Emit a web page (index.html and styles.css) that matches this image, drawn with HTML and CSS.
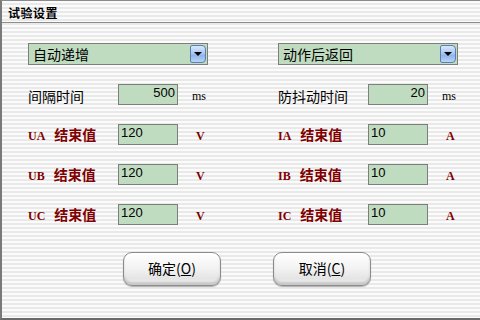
FILE: index.html
```html
<!DOCTYPE html>
<html>
<head>
<meta charset="utf-8">
<link rel="stylesheet" href="styles.css">
</head>
<body>
<div class="win">
  <div class="title">试验设置</div>
  <div class="content">
    <div class="grid">
      <div class="select"><span class="sel-text">自动递增</span><span class="sel-btn"><span class="tri"></span></span></div>
      <div class="select"><span class="sel-text">动作后返回</span><span class="sel-btn"><span class="tri"></span></span></div>

      <div class="row"><span class="label">间隔时间</span><span class="input right">500</span><span class="unit ms">ms</span></div>
      <div class="row"><span class="label">防抖动时间</span><span class="input right">20</span><span class="unit ms">ms</span></div>

      <div class="row"><span class="label red"><b class="code">UA</b>结束值</span><span class="input">120</span><span class="unit va">V</span></div>
      <div class="row"><span class="label red"><b class="code">IA</b>结束值</span><span class="input">10</span><span class="unit va">A</span></div>

      <div class="row"><span class="label red"><b class="code">UB</b>结束值</span><span class="input">120</span><span class="unit va">V</span></div>
      <div class="row"><span class="label red"><b class="code">IB</b>结束值</span><span class="input">10</span><span class="unit va">A</span></div>

      <div class="row"><span class="label red"><b class="code">UC</b>结束值</span><span class="input">120</span><span class="unit va">V</span></div>
      <div class="row"><span class="label red"><b class="code">IC</b>结束值</span><span class="input">10</span><span class="unit va">A</span></div>
    </div>
    <div class="buttons">
      <div class="btn">确定(<u>O</u>)</div>
      <div class="btn">取消(<u>C</u>)</div>
    </div>
  </div>
</div>
</body>
</html>
```

FILE: styles.css
```css
html, body {
  margin: 0;
  padding: 0;
}
body {
  width: 480px;
  height: 320px;
  overflow: hidden;
  font-family: "Noto Sans CJK SC", "Liberation Sans", sans-serif;
}
.win {
  width: 478px;
  height: 317px;
  border-left: 2px solid #7a7a7a;
  border-top: 1px solid #8a8a8a;
  border-bottom: 2px solid #6a6a6a;
  background: repeating-linear-gradient(to bottom, #fbfbfb 0, #fbfbfb 2px, #e9e9e9 2px, #e9e9e9 4px);
  display: flex;
  flex-direction: column;
}
.title {
  height: 21px;
  border-bottom: 1px solid #8c8c8c;
  font-size: 12px;
  font-weight: bold;
  line-height: 23px;
  padding-left: 6px;
  color: #000;
  letter-spacing: 0.5px;
}
.content {
  padding: 20px 0 0 26px;
}
.grid {
  display: grid;
  grid-template-columns: 250px 200px;
  row-gap: 18px;
}
.select {
  width: 178px;
  height: 20px;
  border: 1px solid #7e7e7e;
  background: #c0dcc0;
  display: flex;
  align-items: center;
  justify-content: space-between;
  margin-bottom: 1px;
}
.sel-text {
  font-size: 14px;
  line-height: 20px;
  padding-left: 4px;
  color: #000;
}
.sel-btn {
  width: 16px;
  height: 18px;
  margin-right: 1px;
  border: 1px solid #5d7fae;
  border-radius: 2px 4px 4px 2px;
  background: linear-gradient(to bottom, #d8e8fc 0%, #a9c8f3 45%, #8fb5ec 60%, #b9d4f8 100%);
  display: flex;
  align-items: center;
  justify-content: center;
  box-sizing: border-box;
}
.tri {
  width: 0;
  height: 0;
  border-left: 4px solid transparent;
  border-right: 4px solid transparent;
  border-top: 4px solid #000;
}
.row {
  display: flex;
  align-items: center;
  height: 21px;
  margin-bottom: 1px;
}
.label {
  width: 90px;
  font-size: 14px;
  color: #000;
  line-height: 21px;
  padding-top: 4px;
}
.label.red {
  color: #800000;
  font-weight: bold;
  padding-top: 2px;
}
.code {
  font-family: "Liberation Serif", "DejaVu Serif", serif;
  font-size: 12px;
  margin-right: 9px;
}
.input {
  height: 19px;
  border: 1px solid #7e7e7e;
  background: #c0dcc0;
  font-family: "Liberation Sans", Arial, sans-serif;
  font-size: 13px;
  line-height: 16px;
  padding: 0 2px;
  width: 54px;
  color: #000;
}
.input.right {
  text-align: right;
}
.unit {
  font-family: "Liberation Serif", "DejaVu Serif", serif;
  color: #000;
}
.unit.ms {
  font-size: 12px;
  margin-left: 14px;
  padding-top: 4px;
}
.unit.va {
  color: #800000;
  font-weight: bold;
  font-size: 12px;
  margin-left: 18px;
  padding-top: 4px;
}
.buttons {
  display: flex;
  gap: 52px;
  padding-left: 95px;
  margin-top: 26px;
}
.btn {
  width: 96px;
  height: 32px;
  border: 1px solid #8c8c8c;
  border-radius: 9px;
  background: linear-gradient(to bottom, #ffffff 0%, #f2f2f2 50%, #e4e4e4 80%, #f4f4f4 100%);
  box-shadow: inset 0 -3px 2px #c8c8c8, inset 0 2px 1px #ffffff, 0 1px 1px #b0b0b0;
  font-size: 14px;
  line-height: 31px;
  text-align: center;
  color: #000;
}
.btn u {
  text-underline-offset: 1px;
}
```
